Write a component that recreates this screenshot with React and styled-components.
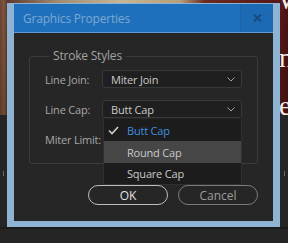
import React from "react";
import styled, { createGlobalStyle } from "styled-components";

const Global = createGlobalStyle`
  html, body { margin: 0; padding: 0; background: #252525; }
  body { font-family: "Open Sans", "Noto Sans", sans-serif; }
  * { box-sizing: border-box; }
`;

const Desktop = styled.div`
  position: relative;
  width: 288px;
  height: 243px;
  overflow: hidden;
  background: #252525;
`;

const Photo = styled.div`
  position: absolute;
  left: 0;
  top: 0;
  width: 288px;
  height: 115px;
  background:
    linear-gradient(180deg, rgba(0,0,0,0) 0, rgba(0,0,0,0.15) 100%),
    linear-gradient(90deg, #6b4433 0, #80573f 4px, #5e3a2c 7px, #a48e72 60px, #c6b595 120px, #b8a078 180px, #6a2a22 205px, #561818 280px, #4a1212 288px);
`;

const SerifGlyph = styled.span`
  position: absolute;
  left: ${(p) => p.x}px;
  top: ${(p) => p.y}px;
  font-family: "Liberation Serif", serif;
  font-size: ${(p) => p.size}px;
  line-height: 1;
  color: #f4efe8;
`;

const Tick = styled.span`
  position: absolute;
  left: ${(p) => p.x}px;
  top: 171px;
  width: 1px;
  height: 5px;
  background: #6a6a6a;
`;

const BottomLine = styled.div`
  position: absolute;
  left: 0;
  top: 227px;
  width: 288px;
  height: 2px;
  background: #1b1b1b;
`;

const Window = styled.div`
  position: absolute;
  left: 7px;
  top: 3px;
  width: 273px;
  height: 224px;
  display: flex;
  flex-direction: column;
  border-style: solid;
  border-color: #8fb3d3;
  border-width: 1px 7px 6px 7px;
  background: #262626;
`;

const TitleBar = styled.div`
  height: 29px;
  flex: none;
  display: flex;
  align-items: center;
  background: #1e70bc;
  border-bottom: 1px solid #5f9bd2;
`;

const Title = styled.div`
  flex: 1;
  padding-left: 9px;
  font-size: 12px;
  color: #7fa8d0;
  letter-spacing: -0.2px;
`;

const CloseButton = styled.div`
  width: 33px;
  height: 100%;
  display: flex;
  align-items: center;
  justify-content: center;
  background: #1c6ab4;
  border-left: 1px solid #1b63a8;
`;

const Body = styled.div`
  flex: 1;
  display: flex;
  flex-direction: column;
  padding: 16px 15px 0 15px;
`;

const Group = styled.fieldset`
  margin: 0;
  padding: 7px 15px 15px 15px;
  border: 1px solid #3b3b3b;
  border-radius: 3px;
  min-width: 0;
`;

const Legend = styled.legend`
  padding: 0 4px;
  margin-left: 4px;
  font-size: 12px;
  line-height: 14px;
  color: #a3a3a3;
  letter-spacing: -0.2px;
`;

const Rows = styled.div`
  display: grid;
  grid-template-columns: 57px 140px;
  grid-auto-rows: 18px;
  row-gap: 12px;
  align-items: center;
`;

const Label = styled.div`
  font-size: 11px;
  color: #a8a8a8;
  white-space: nowrap;
  letter-spacing: -0.2px;
`;

const SelectWrap = styled.div`
  position: relative;
  height: 18px;
`;

const SelectBox = styled.div`
  height: 18px;
  display: flex;
  align-items: center;
  justify-content: space-between;
  padding: 0 6px 0 8px;
  background: #1f1f1f;
  border: 1px solid #383838;
  border-radius: 3px;
  font-size: 11px;
  color: #c9c9c9;
  letter-spacing: -0.2px;
`;

const Menu = styled.div`
  position: absolute;
  left: 1px;
  top: 19px;
  width: 139px;
  background: #1c1c1c;
  border: 1px solid #303030;
  border-top: none;
  z-index: 2;
`;

const Item = styled.div`
  position: relative;
  height: ${(p) => p.h}px;
  display: flex;
  align-items: center;
  padding-left: 23px;
  font-size: 11px;
  letter-spacing: -0.2px;
  color: ${(p) => (p.selected ? "#3f8fdf" : "#c9c9c9")};
  background: ${(p) => (p.hover ? "#464646" : "transparent")};
`;

const Check = styled.svg`
  position: absolute;
  left: 4px;
  top: 7px;
`;

const Buttons = styled.div`
  display: flex;
  justify-content: flex-end;
  gap: 10px;
  margin-top: 21px;
`;

const Button = styled.div`
  width: 80px;
  height: 20px;
  display: flex;
  align-items: center;
  justify-content: center;
  border-radius: 10px;
  border: 1px solid ${(p) => (p.primary ? "#bdbdbd" : "#7b7b7b")};
  color: ${(p) => (p.primary ? "#e2e2e2" : "#9c9c9c")};
  font-size: 12px;
`;

const Chevron = () => (
  <svg width="8" height="5" viewBox="0 0 8 5">
    <path d="M0.5 0.5 L4 4 L7.5 0.5" fill="none" stroke="#a0a0a0" strokeWidth="1" />
  </svg>
);

export default function App() {
  return (
    <Desktop>
      <Global />
      <Photo>
        <SerifGlyph x={278} y={-14} size={28}>W</SerifGlyph>
        <SerifGlyph x={279} y={44} size={28}>n</SerifGlyph>
        <SerifGlyph x={279} y={92} size={28}>e</SerifGlyph>
      </Photo>
      <Tick x={3} />
      <Tick x={284} />
      <BottomLine />
      <Window>
        <TitleBar>
          <Title>Graphics Properties</Title>
          <CloseButton>
            <svg width="9" height="8" viewBox="0 0 9 8">
              <path d="M1 0.5 L8 7.5 M8 0.5 L1 7.5" stroke="#164b7e" strokeWidth="2" />
            </svg>
          </CloseButton>
        </TitleBar>
        <Body>
          <Group>
            <Legend>Stroke Styles</Legend>
            <Rows>
              <Label>Line Join:</Label>
              <SelectWrap>
                <SelectBox>
                  <span>Miter Join</span>
                  <Chevron />
                </SelectBox>
              </SelectWrap>
              <Label>Line Cap:</Label>
              <SelectWrap>
                <SelectBox>
                  <span>Butt Cap</span>
                  <Chevron />
                </SelectBox>
                <Menu>
                  <Item h={22} selected>
                    <Check width="11" height="9" viewBox="0 0 11 9">
                      <path d="M1 4.5 L4 7.5 L10 1" fill="none" stroke="#cfcfcf" strokeWidth="1.6" />
                    </Check>
                    Butt Cap
                  </Item>
                  <Item h={22} hover>Round Cap</Item>
                  <Item h={21}>Square Cap</Item>
                </Menu>
              </SelectWrap>
              <Label>Miter Limit:</Label>
              <SelectWrap />
            </Rows>
          </Group>
          <Buttons>
            <Button primary>OK</Button>
            <Button>Cancel</Button>
          </Buttons>
        </Body>
      </Window>
    </Desktop>
  );
}
